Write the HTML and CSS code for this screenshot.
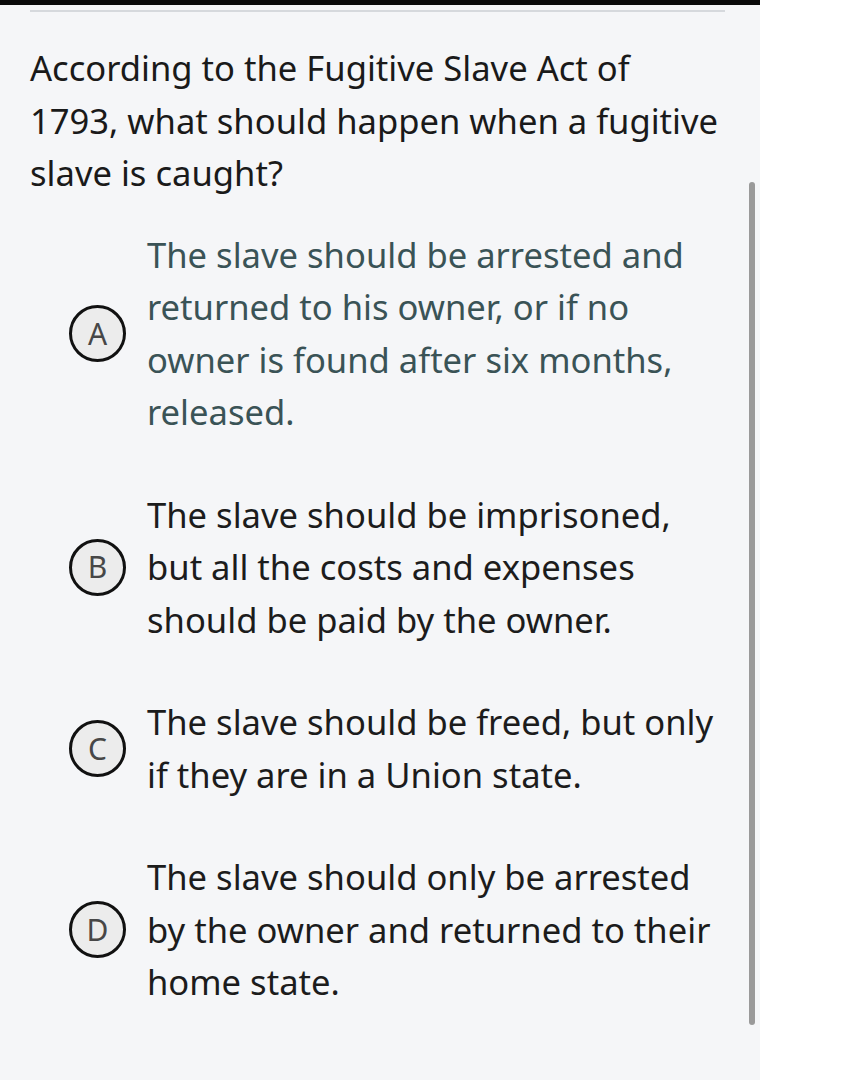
FILE: index.html
```html
<!DOCTYPE html>
<html>
<head>
<meta charset="utf-8">
<link rel="stylesheet" href="styles.css">
</head>
<body>
<div class="page">
  <div class="topbar"></div>
  <div class="divider"></div>
  <p class="question">According to the Fugitive Slave Act of 1793, what should happen when a fugitive slave is caught?</p>
  <div class="options">
    <div class="option selected">
      <span class="letter">A</span>
      <span class="text">The slave should be arrested and returned to his owner, or if no owner is found after six months, released.</span>
    </div>
    <div class="option">
      <span class="letter">B</span>
      <span class="text">The slave should be imprisoned, but all the costs and expenses should be paid by the owner.</span>
    </div>
    <div class="option">
      <span class="letter">C</span>
      <span class="text">The slave should be freed, but only if they are in a Union state.</span>
    </div>
    <div class="option">
      <span class="letter">D</span>
      <span class="text">The slave should only be arrested by the owner and returned to their home state.</span>
    </div>
  </div>
  <div class="scrollbar"></div>
</div>
</body>
</html>
```
FILE: styles.css
```css
html, body {
  margin: 0;
  padding: 0;
  background: #ffffff;
}
.page {
  position: relative;
  width: 760px;
  height: 1080px;
  background: #f5f6f8;
  font-family: "Noto Sans", "Open Sans", sans-serif;
  color: #1a1a1a;
}
.topbar {
  height: 5px;
  background: #0a0a0a;
}
.divider {
  height: 2px;
  margin: 5px 35px 0 30px;
  background: #d6d9dd;
}
.question {
  margin: 30px 0 0 30px;
  width: 693px;
  font-size: 34.6px;
  line-height: 52.5px;
}
.options {
  display: flex;
  flex-direction: column;
  gap: 50px;
  margin-top: 29px;
}
.option {
  display: flex;
  align-items: center;
  gap: 21px;
  padding-left: 69px;
}
.letter {
  flex: none;
  width: 51px;
  height: 51px;
  border: 3px solid #111;
  border-radius: 50%;
  background: #ececec;
  color: #474747;
  font-size: 30px;
  display: flex;
  align-items: center;
  justify-content: center;
  line-height: 1;
}
.text {
  width: 582px;
  font-size: 34.6px;
  line-height: 52.5px;
  color: #1c1c1c;
}
.selected .text {
  color: #3a5356;
}
.scrollbar {
  position: absolute;
  left: 749px;
  top: 182px;
  width: 6px;
  height: 843px;
  border-radius: 3px;
  background: #9a9a9a;
}
```
